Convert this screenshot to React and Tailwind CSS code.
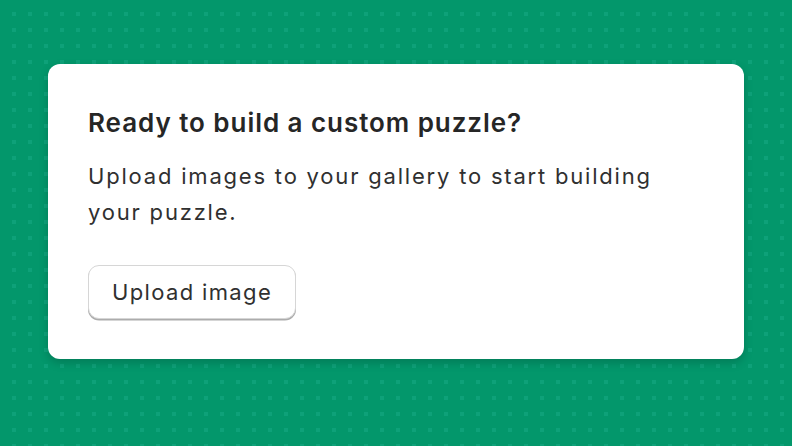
export default function App() {
  return (
    <div className="relative w-[792px] h-[446px] overflow-hidden bg-[#03976b]" style={{ fontFamily: 'Inter, "Noto Sans", sans-serif' }}>
      <svg className="absolute inset-0" width="792" height="446" aria-hidden="true">
        <defs>
          <pattern id="dots" x="0" y="0" width="16" height="16" patternUnits="userSpaceOnUse">
            <rect x="12" y="12" width="4" height="4" fill="#0ea179" />
          </pattern>
        </defs>
        <rect width="792" height="446" fill="url(#dots)" />
      </svg>
      <div className="relative px-[48px] pt-[64px]">
        <div className="bg-white rounded-[12px] shadow-[0_4px_10px_rgba(0,0,0,0.18)] h-[295px] px-[40px] pt-[43px] text-[#303030]">
          <h1 className="text-[26px] leading-[32px] font-semibold tracking-[0.95px] text-[#262626]">Ready to build a custom puzzle?</h1>
          <p className="mt-[19px] text-[22px] leading-[36px] tracking-[1.8px] w-[600px]">Upload images to your gallery to start building your puzzle.</p>
          <button className="mt-[35px] h-[54px] px-[23px] rounded-[11px] border border-[#d6d6d6] bg-white text-[22px] tracking-[1.35px] text-[#303030] shadow-[0_1.5px_0_#acacac]">Upload image</button>
        </div>
      </div>
    </div>
  );
}
